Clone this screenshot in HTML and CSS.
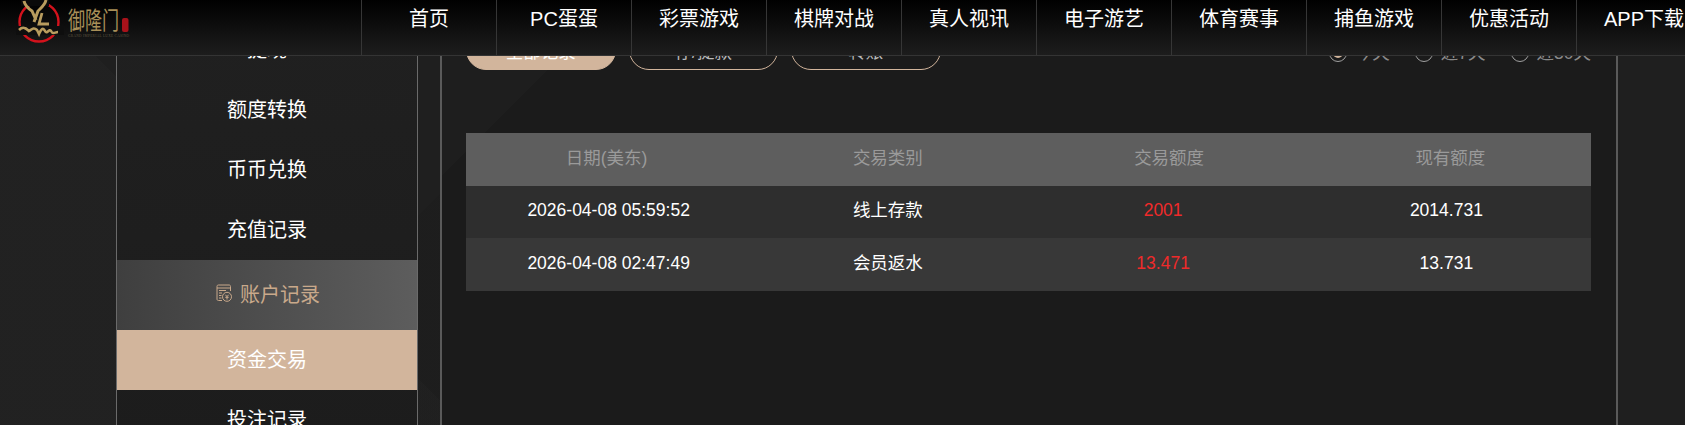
FILE: index.html
```html
<!DOCTYPE html>
<html lang="zh-CN">
<head>
<meta charset="utf-8">
<title>资金交易</title>
<link rel="stylesheet" href="styles.css">
</head>
<body>
<header class="topbar">
  <a class="logo">
    <svg class="logo-art" width="140" height="55" viewBox="0 0 140 55">
      <circle cx="39" cy="22" r="19.5" fill="none" stroke="#d3121c" stroke-width="2.4"/>
      <rect x="21" y="0" width="28" height="6" fill="#0a0a0a"/>
      <rect x="16" y="26" width="48" height="9" fill="#0e0e0e"/>
      <path d="M24 1 C25 6 29 9 32 11 L36 20 M46 0 C45 5 41 8 38 11 L34 22" fill="none" stroke="#b89c5e" stroke-width="3"/>
      <path d="M42 13 L39 24 L49 24" fill="none" stroke="#b89c5e" stroke-width="2.800"/>
      <path d="M19 30 C23 26 26 28 29 31 C32 29 34 27 37 30 L39 34 C41 29 43 27 45 31 C47 35 49 28 51 31 C53 35 55 32 58 32" fill="none" stroke="#b89c5e" stroke-width="2.600"/>
      <text class="logo-name" transform="translate(68 29) scale(0.71 1)" x="0" y="0">御隆门</text>
      <rect x="122" y="18" width="6.500" height="14" rx="2" fill="#a8121a"/>
      <text class="logo-sub" x="68" y="37" textLength="61">GRAND IMPERIAL LUXE CASINO</text>
    </svg>
  </a>
  <nav class="nav">
    <a class="nav-item">首页</a>
    <a class="nav-item">PC蛋蛋</a>
    <a class="nav-item">彩票游戏</a>
    <a class="nav-item">棋牌对战</a>
    <a class="nav-item">真人视讯</a>
    <a class="nav-item">电子游艺</a>
    <a class="nav-item">体育赛事</a>
    <a class="nav-item">捕鱼游戏</a>
    <a class="nav-item">优惠活动</a>
    <a class="nav-item">APP下载</a>
  </nav>
</header>

<div class="page">
  <aside class="sidebar">
    <a class="side-item">提现</a>
    <a class="side-item">额度转换</a>
    <a class="side-item">币币兑换</a>
    <a class="side-item">充值记录</a>
    <div class="side-group">
      <svg class="side-icon" width="16" height="18" viewBox="0 0 16 18">
        <path d="M6 16.500H2.500C1.500 16.500 1 16 1 15V2.500C1 1.500 1.500 1 2.500 1H13C14 1 14.500 1.500 14.500 2.500V7M1 4H14.500" fill="none" stroke="currentColor" stroke-width="1"/>
        <path d="M3 6.500H10M3 9H6M3 11.500H5.500M3 14H5.500" fill="none" stroke="currentColor" stroke-width="1"/>
        <circle cx="11" cy="12.800" r="4.500" fill="none" stroke="currentColor" stroke-width="1"/>
        <path d="M9.500 10.800L11 12.800L12.500 10.800M9.300 13.300H12.700M11 12.800V15.500" fill="none" stroke="currentColor" stroke-width="1"/>
      </svg>
      <span>账户记录</span>
    </div>
    <a class="side-item side-item-active">资金交易</a>
    <a class="side-item">投注记录</a>
  </aside>

  <main class="content">
    <div class="filters">
      <div class="tabs">
        <button class="tab tab-active">全部记录</button>
        <button class="tab">存/提款</button>
        <button class="tab">转账</button>
      </div>
      <div class="radios">
        <label class="radio"><i class="radio-dot radio-dot-on"></i>今天</label>
        <label class="radio"><i class="radio-dot"></i>近7天</label>
        <label class="radio"><i class="radio-dot"></i>近30天</label>
      </div>
    </div>

    <table class="records">
      <thead>
        <tr>
          <th>日期(美东)</th>
          <th>交易类别</th>
          <th>交易额度</th>
          <th>现有额度</th>
        </tr>
      </thead>
      <tbody>
        <tr class="row-a">
          <td class="date">2026-04-08 05:59:52</td>
          <td>线上存款</td>
          <td class="amount">2001</td>
          <td class="balance">2014.731</td>
        </tr>
        <tr class="row-b">
          <td class="date">2026-04-08 02:47:49</td>
          <td>会员返水</td>
          <td class="amount">13.471</td>
          <td class="balance">13.731</td>
        </tr>
      </tbody>
    </table>
  </main>
</div>
</body>
</html>
```

FILE: styles.css
```css
* {
  box-sizing: border-box;
}

html,
body {
  margin: 0;
  height: 425px;
  overflow: hidden;
}

body {
  color: #fff;
  font-family: "Liberation Sans", "Noto Sans CJK SC", sans-serif;
  background-color: #1f1f1f;
  background-image:
    linear-gradient(135deg, transparent 0 30%, rgba(0, 0, 0, 0.05) 30% 44%, transparent 44%),
    linear-gradient(45deg, rgba(255, 255, 255, 0.012) 0 22%, transparent 22%);
}

a {
  color: inherit;
  text-decoration: none;
}

/* top bar lies over the scrolled page */
.topbar {
  position: fixed;
  top: 0;
  left: 0;
  right: 0;
  z-index: 5;
  display: flex;
  height: 56px;
  background: linear-gradient(180deg, #000 0%, #1d1d1d 100%);
  border-bottom: 1px solid #343434;
  overflow: hidden;
}

.logo {
  flex: 0 0 361px;
}

.logo-art {
  display: block;
}

.logo-name {
  fill: #a88f58;
  font-size: 24px;
  font-weight: 400;
}

.logo-sub {
  fill: #5e5440;
  font-family: "Liberation Serif", serif;
  font-size: 3.500px;
}

.nav {
  display: flex;
  flex: 0 0 auto;
}

.nav-item {
  width: 135px;
  height: 55px;
  padding-top: 6px;
  border-left: 1px solid #363636;
  font-size: 20px;
  line-height: 27px;
  text-align: center;
}

/* page body */
.page {
  display: flex;
  align-items: flex-start;
  height: 425px;
  padding-left: 116px;
  overflow: hidden;
}

.sidebar {
  flex: 0 0 302px;
  margin-top: 20px;
  background: linear-gradient(180deg, #202020 0%, #1c1c1c 100%);
  border-left: 1px solid #6a6a6a;
  border-right: 1px solid #6a6a6a;
}

.side-item {
  display: block;
  height: 60px;
  font-size: 20px;
  line-height: 60px;
  text-align: center;
}

.side-item-active {
  background: #d2b59c;
}

.side-group {
  display: flex;
  align-items: center;
  justify-content: center;
  gap: 8px;
  height: 70px;
  padding: 0 0 4px 2px;
  color: #c9a98b;
  font-size: 20px;
  background: linear-gradient(90deg, #3f3f3f 0%, #5d5d5d 100%);
}

.side-icon {
  display: block;
}

.content {
  flex: 0 0 1178px;
  height: 425px;
  margin-left: 22px;
  padding: 30px 25px 0 24px;
  background: linear-gradient(135deg, #1e1e1e 0 11%, #1b1b1b 11%);
  border-left: 2px solid #5a5a5a;
  border-right: 2px solid #5a5a5a;
}

.filters {
  display: flex;
  align-items: flex-start;
  justify-content: space-between;
}

.tabs {
  display: flex;
  gap: 13px;
}

.tab {
  width: 149.500px;
  height: 40px;
  padding: 0;
  color: #b9b9b9;
  font: inherit;
  font-size: 17.500px;
  background: transparent;
  border: 1px solid #d2b59c;
  border-radius: 20px;
}

.tab-active {
  color: #fff;
  background: #d2b59c;
}

.radios {
  display: flex;
  gap: 25px;
  padding-top: 14px;
}

.radio {
  display: flex;
  align-items: center;
  gap: 8px;
  color: #8a8a8a;
  font-size: 17.500px;
  line-height: 18px;
}

.radio-dot {
  display: flex;
  align-items: center;
  justify-content: center;
  width: 18px;
  height: 18px;
  border: 1px solid #a0a0a0;
  border-radius: 50%;
}

.radio-dot-on::after {
  content: "";
  width: 10px;
  height: 10px;
  background: #d2b59c;
  border-radius: 50%;
}

.records {
  width: 1125px;
  margin-top: 63px;
  border-collapse: collapse;
  table-layout: fixed;
  font-size: 17.500px;
  line-height: 22px;
  text-align: center;
}

.records th {
  height: 53px;
  padding: 0 0 4px;
  color: #9a9a9a;
  font-weight: 400;
  background: #5e5e5e;
}

.records td {
  padding: 0 0 4px;
}

.row-a td {
  height: 52px;
  background: #2e2e2e;
}

.row-b td {
  height: 53px;
  background: #383838;
}

.records .date {
  padding-left: 4px;
}

.records .amount {
  padding-right: 12px;
  color: #ef2a2a;
}

.records .balance {
  padding-right: 8px;
}
```
